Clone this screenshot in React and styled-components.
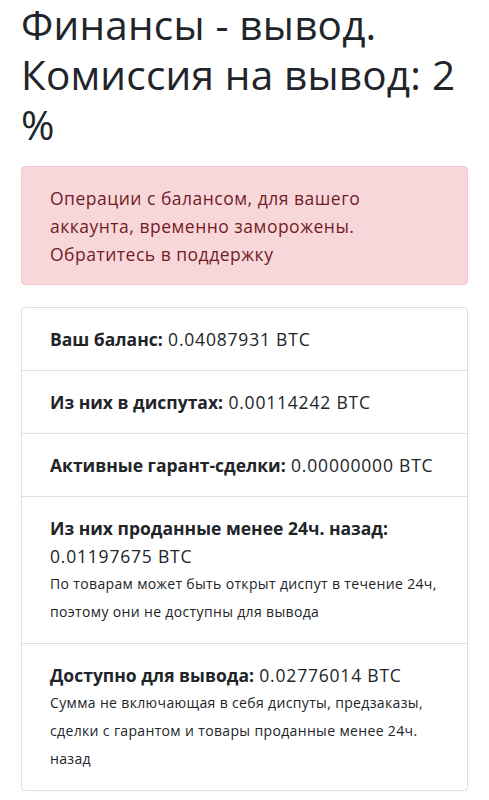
import React from 'react';
import styled, { createGlobalStyle } from 'styled-components';

const GlobalStyle = createGlobalStyle`
  body {
    margin: 0;
    background: #fff;
    color: #212529;
    font-family: "Open Sans", "Noto Sans", sans-serif;
  }
`;

const Page = styled.div`
  padding: 0 21px 8px 21px;
`;

const Title = styled.h1`
  margin: 0 0 16px 0;
  font-weight: 400;
  font-size: 40.5px;
  line-height: 50px;
  letter-spacing: 0.2px;
  color: #212529;
`;

const Alert = styled.div`
  background: #f8d7da;
  border: 1px solid #f5c6cb;
  border-radius: 4px;
  color: #721c24;
  padding: 17px 28px 16px 28px;
  font-size: 17.5px;
  line-height: 28px;
  letter-spacing: 0.5px;
  margin-bottom: 22px;
`;

const List = styled.ul`
  list-style: none;
  margin: 0;
  padding: 0;
  border: 1px solid rgba(0, 0, 0, 0.125);
  border-radius: 4px;
`;

const Item = styled.li`
  padding: 17px 28px 17px 28px;
  font-size: 17.5px;
  line-height: 28px;
  letter-spacing: 0.8px;

  &:not(:last-child) {
    border-bottom: 1px solid rgba(0, 0, 0, 0.125);
  }
`;

const Label = styled.b`
  font-weight: 700;
  letter-spacing: 0;
`;

const Note = styled.div`
  font-size: 14px;
  line-height: 28px;
  letter-spacing: 0.35px;
`;

const rows = [
  { label: 'Ваш баланс:', value: '0.04087931 BTC' },
  { label: 'Из них в диспутах:', value: '0.00114242 BTC' },
  { label: 'Активные гарант-сделки:', value: '0.00000000 BTC' },
  {
    label: 'Из них проданные менее 24ч. назад:',
    value: '0.01197675 BTC',
    note: 'По товарам может быть открыт диспут в течение 24ч, поэтому они не доступны для вывода'
  },
  {
    label: 'Доступно для вывода:',
    value: '0.02776014 BTC',
    note: 'Сумма не включающая в себя диспуты, предзаказы, сделки с гарантом и товары проданные менее 24ч. назад'
  }
];

export default function App() {
  return (
    <Page>
      <GlobalStyle />
      <Title>Финансы - вывод. Комиссия на вывод: 2 %</Title>
      <Alert>
        Операции с балансом, для вашего аккаунта, временно заморожены.
        Обратитесь в поддержку
      </Alert>
      <List>
        {rows.map(row => (
          <Item key={row.label}>
            <Label>{row.label}</Label> {row.value}
            {row.note && <Note>{row.note}</Note>}
          </Item>
        ))}
      </List>
    </Page>
  );
}
